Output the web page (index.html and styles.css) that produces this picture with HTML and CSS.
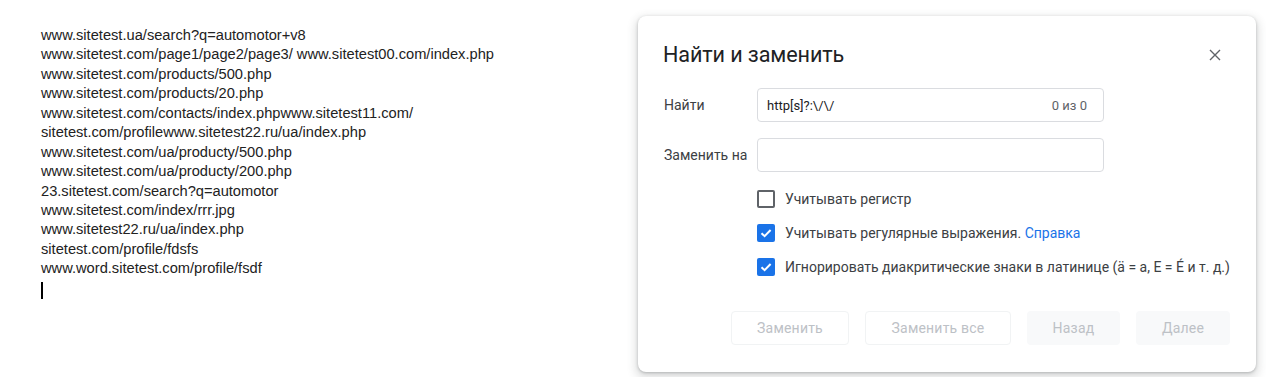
FILE: index.html
```html
<!DOCTYPE html>
<html lang="ru">
<head>
<meta charset="utf-8">
<title>Найти и заменить</title>
<link rel="stylesheet" href="styles.css">
</head>
<body>
<div class="doc">
  <div class="line">www.sitetest.ua/search?q=automotor+v8</div>
  <div class="line">www.sitetest.com/page1/page2/page3/ www.sitetest00.com/index.php</div>
  <div class="line">www.sitetest.com/products/500.php</div>
  <div class="line">www.sitetest.com/products/20.php</div>
  <div class="line">www.sitetest.com/contacts/index.phpwww.sitetest11.com/</div>
  <div class="line">sitetest.com/profilewww.sitetest22.ru/ua/index.php</div>
  <div class="line">www.sitetest.com/ua/producty/500.php</div>
  <div class="line">www.sitetest.com/ua/producty/200.php</div>
  <div class="line">23.sitetest.com/search?q=automotor</div>
  <div class="line">www.sitetest.com/index/rrr.jpg</div>
  <div class="line">www.sitetest22.ru/ua/index.php</div>
  <div class="line">sitetest.com/profile/fdsfs</div>
  <div class="line">www.word.sitetest.com/profile/fsdf</div>
  <div class="line"><span class="caret"></span></div>
</div>

<div class="dialog">
  <div class="header">
    <div class="title">Найти и заменить</div>
    <svg class="close" width="12" height="12" viewBox="0 0 12 12"><path d="M1 1L11 11M11 1L1 11" stroke="#5f6368" stroke-width="1.4" fill="none"/></svg>
  </div>
  <div class="field">
    <div class="label">Найти</div>
    <div class="input"><span class="value">http[s]?:\/\/</span><span class="count">0 из 0</span></div>
  </div>
  <div class="field">
    <div class="label">Заменить на</div>
    <div class="input"></div>
  </div>
  <div class="options">
    <div class="option"><span class="box"></span><span>Учитывать регистр</span></div>
    <div class="option"><span class="box checked"><svg width="18" height="18" viewBox="0 0 18 18"><path d="M4.5 9.2L7.6 12.2L13.6 6" stroke="#fff" stroke-width="2" fill="none"/></svg></span><span>Учитывать регулярные выражения. <span class="link">Справка</span></span></div>
    <div class="option"><span class="box checked"><svg width="18" height="18" viewBox="0 0 18 18"><path d="M4.5 9.2L7.6 12.2L13.6 6" stroke="#fff" stroke-width="2" fill="none"/></svg></span><span>Игнорировать диакритические знаки в латинице (ä = a, E = É и т. д.)</span></div>
  </div>
  <div class="buttons">
    <div class="btn outline b1">Заменить</div>
    <div class="btn outline b2">Заменить все</div>
    <div class="btn filled b3">Назад</div>
    <div class="btn filled b4">Далее</div>
  </div>
</div>
</body>
</html>
```
FILE: styles.css
```css
html, body {
  margin: 0;
  padding: 0;
  background: #fff;
}
body {
  width: 1266px;
  height: 377px;
  overflow: hidden;
  position: relative;
}
.doc {
  padding: 26px 0 0 41px;
  font-family: "Liberation Sans", Arial, sans-serif;
  font-size: 14.67px;
  color: #222;
}
.line {
  height: 19.45px;
  line-height: 19.45px;
  white-space: nowrap;
}
.caret {
  display: inline-block;
  width: 2px;
  height: 17px;
  background: #000;
  vertical-align: -6px;
}
.dialog {
  position: absolute;
  left: 638px;
  top: 16px;
  width: 618px;
  height: 356px;
  box-sizing: border-box;
  background: #fff;
  border-radius: 8px;
  box-shadow: 0 4px 8px 3px rgba(60,64,67,0.15), 0 1px 3px rgba(60,64,67,0.3);
  padding: 24px 0 0 25px;
  font-family: Roboto, "Noto Sans", sans-serif;
  color: #3c4043;
}
.header {
  display: flex;
  align-items: center;
  height: 29px;
  padding-right: 35px;
}
.title {
  flex: 1;
  font-size: 21.6px;
  color: #202124;
  letter-spacing: -0.1px;
}
.close {
  display: block;
}
.field {
  display: flex;
  align-items: center;
  margin-top: 19px;
}
.field + .field {
  margin-top: 16px;
}
.label {
  width: 94px;
  font-size: 14px;
  color: #3c4043;
  padding-left: 1px;
  box-sizing: border-box;
}
.input {
  width: 347px;
  height: 34px;
  box-sizing: border-box;
  border: 1px solid #dadce0;
  border-radius: 4px;
  display: flex;
  align-items: center;
  justify-content: space-between;
  padding: 0 16px 0 9px;
  font-size: 13px;
}
.value {
  color: #202124;
}
.count {
  color: #5f6368;
}
.options {
  margin: 18px 0 0 94px;
  display: flex;
  flex-direction: column;
  gap: 16px;
}
.option {
  display: flex;
  align-items: center;
  height: 18px;
  gap: 10px;
  font-size: 14px;
  color: #3c4043;
  white-space: nowrap;
}
.box {
  width: 18px;
  height: 18px;
  box-sizing: border-box;
  border: 2px solid #5f6368;
  border-radius: 2px;
  flex: none;
}
.box.checked {
  border: none;
  background: #1a73e8;
}
.box svg {
  display: block;
}
.link {
  color: #1a73e8;
}
.buttons {
  display: flex;
  justify-content: flex-end;
  gap: 16px;
  margin-top: 35px;
  padding-right: 26px;
}
.btn {
  height: 34px;
  box-sizing: border-box;
  border-radius: 4px;
  display: flex;
  align-items: center;
  justify-content: center;
  font-size: 14px;
  color: #bdc1c6;
  letter-spacing: 0.2px;
}
.outline {
  border: 1px solid #f1f3f4;
  background: #fff;
}
.filled {
  background: #f8f9fa;
}
.b1 { width: 118px; }
.b2 { width: 146px; }
.b3 { width: 93px; }
.b4 { width: 94px; }
```
